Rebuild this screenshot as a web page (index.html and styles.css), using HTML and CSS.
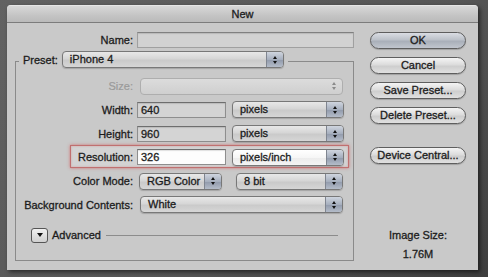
FILE: index.html
```html
<!DOCTYPE html>
<html>
<head>
<meta charset="utf-8">
<title>New</title>
<link rel="stylesheet" href="styles.css">
</head>
<body>
<div class="window">
  <div class="titlebar">New</div>
  <div class="content">
    <div class="main">
      <div class="row name-row">
        <label class="lbl">Name:</label>
        <div class="field field-name"></div>
      </div>
      <div class="group">
        <div class="group-head">
          <label class="head-lbl">Preset:</label>
          <div class="popup w-preset"><span class="pv">iPhone 4</span><span class="arrows"><i class="up"></i><i class="dn"></i></span></div>
        </div>
        <div class="rows">
          <div class="row">
            <label class="lbl disabled">Size:</label>
            <div class="popup popup-off w-wide"><span class="pv"></span><span class="arrows"><i class="up"></i><i class="dn"></i></span></div>
          </div>
          <div class="row">
            <label class="lbl">Width:</label>
            <div class="field w-num">640</div>
            <div class="popup w-unit"><span class="pv">pixels</span><span class="arrows"><i class="up"></i><i class="dn"></i></span></div>
          </div>
          <div class="row">
            <label class="lbl">Height:</label>
            <div class="field w-num">960</div>
            <div class="popup w-unit"><span class="pv">pixels</span><span class="arrows"><i class="up"></i><i class="dn"></i></span></div>
          </div>
          <div class="row highlight">
            <label class="lbl">Resolution:</label>
            <div class="field field-white w-num">326</div>
            <div class="popup popup-white w-unit"><span class="pv">pixels/inch</span><span class="arrows"><i class="up"></i><i class="dn"></i></span></div>
          </div>
          <div class="row">
            <label class="lbl">Color Mode:</label>
            <div class="popup w-mode"><span class="pv">RGB Color</span><span class="arrows"><i class="up"></i><i class="dn"></i></span></div>
            <div class="popup w-bit"><span class="pv">8 bit</span><span class="arrows"><i class="up"></i><i class="dn"></i></span></div>
          </div>
          <div class="row">
            <label class="lbl">Background Contents:</label>
            <div class="popup w-wide"><span class="pv">White</span><span class="arrows"><i class="up"></i><i class="dn"></i></span></div>
          </div>
        </div>
        <div class="advanced">
          <span class="disclosure"><i></i></span>
          <span class="adv-text">Advanced</span>
          <span class="adv-line"></span>
        </div>
      </div>
    </div>
    <div class="side">
      <button class="btn btn-default">OK</button>
      <button class="btn">Cancel</button>
      <button class="btn">Save Preset...</button>
      <button class="btn">Delete Preset...</button>
      <button class="btn btn-device">Device Central...</button>
      <div class="imgsize">
        <div>Image Size:</div>
        <div class="imgsize-val">1.76M</div>
      </div>
    </div>
  </div>
</div>
</body>
</html>
```
FILE: styles.css
```css
html, body {
  margin: 0;
  padding: 0;
}
body {
  background: linear-gradient(135deg, #626262 0%, #565656 60%, #3e3e3e 100%);
  width: 488px;
  height: 277px;
  overflow: hidden;
  padding: 5px 0 0 7px;
  box-sizing: border-box;
  font-family: "Liberation Sans", Arial, sans-serif;
  font-size: 11px;
  color: #1c1c1c;
  -webkit-text-stroke: 0.3px #1c1c1c;
}
.window {
  width: 471px;
  height: 265px;
  background: #c9c9c9;
  border-radius: 4px 4px 0 0;
  box-shadow: 2px 2px 4px rgba(0,0,0,0.55);
  overflow: hidden;
}
.titlebar {
  height: 18px;
  line-height: 16px;
  text-align: center;
  background: linear-gradient(#d8d8d8, #c4c4c4 60%, #bababa);
  border-top: 1px solid #e6e6e6;
  border-bottom: 1px solid #7c7c7c;
  box-sizing: border-box;
  color: #222;
}
.content {
  display: flex;
  padding: 9px 0 0 8px;
}
.main {
  width: 339px;
}
.row {
  display: flex;
  align-items: center;
  height: 16px;
}
.lbl {
  width: 117px;
  margin-right: 4px;
  text-align: right;
  white-space: nowrap;
  flex: none;
}
.name-row .lbl { width: 118px; }
.lbl.disabled {
  color: #9a9a9a;
  -webkit-text-stroke: 0.2px #9a9a9a;
}
.field {
  height: 16px;
  box-sizing: border-box;
  background: #d4d4d4;
  border: 1px solid #8e8e8e;
  border-top-color: #6e6e6e;
  box-shadow: inset 0 1px 1px rgba(0,0,0,0.12);
  padding: 0 3px;
  line-height: 14px;
  flex: none;
}
.field-name { width: 217px; background: #d2d2d2; border-color: #a0a0a0; border-top-color: #808080; }
.field-white { background: #fdfdfd; }
.w-num { width: 89px; }

.popup {
  height: 17px;
  box-sizing: border-box;
  border: 1px solid #787878;
  border-radius: 4px;
  background: linear-gradient(#e8e8e8, #d6d6d6 45%, #cacaca 55%, #d6d6d6);
  display: flex;
  align-items: center;
  overflow: hidden;
  box-shadow: 0 1px 1px rgba(0,0,0,0.18);
  flex: none;
}
.popup-white {
  background: linear-gradient(#ffffff, #f6f6f6 50%, #ececec 55%, #f4f4f4);
}
.popup .pv {
  flex: 1;
  padding-left: 7px;
  line-height: 15px;
  white-space: nowrap;
}
.arrows {
  width: 16px;
  flex: none;
  height: 100%;
  border-left: 1px solid #7f8590;
  background: linear-gradient(#cfd5df, #a6afbe 50%, #939cad 55%, #b4bcc9);
  display: flex;
  flex-direction: column;
  align-items: center;
  justify-content: center;
  gap: 2px;
}
.arrows i {
  display: block;
  width: 0;
  height: 0;
  border-left: 2px solid transparent;
  border-right: 2px solid transparent;
}
.arrows .up { border-bottom: 3px solid #111; }
.arrows .dn { border-top: 3px solid #111; }
.popup-off {
  border-color: #aeaeae;
  background: linear-gradient(#dcdcdc, #cfcfcf);
  box-shadow: none;
}
.popup-off .arrows {
  background: transparent;
  border-left: none;
}
.popup-off .arrows .up { border-bottom-color: #8a8a8a; }
.popup-off .arrows .dn { border-top-color: #8a8a8a; }

.w-preset { width: 222px; }
.w-wide { width: 203px; margin-left: 3px; }
.w-unit { width: 112px; margin-left: 6px; }
.w-mode { width: 83px; margin-left: 2px; }
.w-bit { width: 107px; margin-left: 14px; }

.group {
  margin-top: 13px;
  border: 1px solid #8a8a8a;
  height: 200px;
  box-sizing: border-box;
}
.group-head {
  display: flex;
  align-items: center;
  width: fit-content;
  height: 17px;
  margin: -11px 0 0 3px;
  padding: 0 4px;
  background: #c9c9c9;
}
.head-lbl { margin-right: 4px; }
.rows {
  margin-top: 10px;
  display: flex;
  flex-direction: column;
  gap: 7.75px;
}
.highlight {
  position: relative;
  isolation: isolate;
}
.highlight::before {
  content: "";
  position: absolute;
  left: 54px;
  right: 4px;
  top: -4px;
  bottom: -3px;
  z-index: -1;
  border: 1px solid #c07070;
  background: rgba(255,255,255,0.2);
  box-shadow: 0 0 3px rgba(210,80,80,0.7), inset 0 0 2px rgba(210,80,80,0.4);
}
.advanced {
  display: flex;
  align-items: center;
  margin-top: 15px;
  height: 15px;
}
.disclosure {
  margin-left: 15px;
  width: 17px;
  height: 15px;
  box-sizing: border-box;
  border: 1px solid #555;
  border-radius: 3px;
  background: linear-gradient(#f0f0f0, #d0d0d0);
  display: flex;
  align-items: center;
  justify-content: center;
}
.disclosure i {
  display: block;
  width: 0;
  height: 0;
  border-left: 3px solid transparent;
  border-right: 3px solid transparent;
  border-top: 4px solid #111;
}
.adv-text { margin-left: 4px; }
.adv-line {
  flex: 1;
  height: 1px;
  background: #8c8c8c;
  margin: 0 15px 0 5px;
}

.side {
  width: 96px;
  margin-left: 16px;
  display: flex;
  flex-direction: column;
  gap: 8px;
}
.btn {
  height: 17px;
  width: 96px;
  padding: 0;
  border: 1px solid #5e5e5e;
  border-radius: 9px;
  background: linear-gradient(#f4f4f4, #dcdcdc 45%, #cecece 55%, #e0e0e0);
  font-family: "Liberation Sans", Arial, sans-serif;
  font-size: 11px;
  color: #1c1c1c;
  -webkit-text-stroke: 0.3px #1c1c1c;
  line-height: 15px;
  text-align: center;
  box-shadow: 0 1px 1px rgba(0,0,0,0.2);
}
.btn-default {
  background: linear-gradient(#dadde3, #bcc1c9 45%, #a9afb9 55%, #c1c6ce);
}
.btn-device { margin-top: 15px; }
.imgsize {
  margin-top: 57px;
  text-align: center;
  line-height: 13px;
}
.imgsize-val { margin-top: 6px; }
```
